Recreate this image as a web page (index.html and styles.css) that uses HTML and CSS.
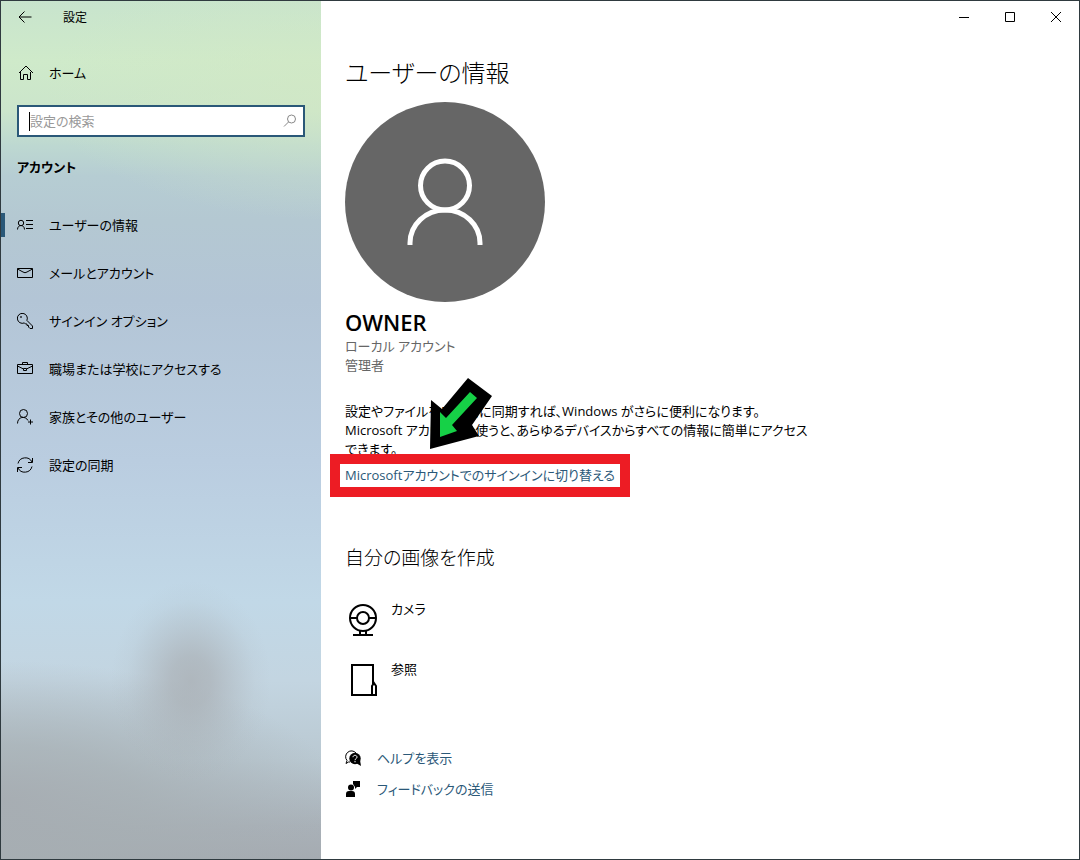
FILE: index.html
```html
<!DOCTYPE html>
<html lang="ja">
<head>
    <meta charset="UTF-8">
    <meta name="viewport" content="width=device-width, initial-scale=1">
    <title>設定</title>
    <link rel="stylesheet" href="styles.css">
</head>
<body>
    <div class="window">
        <aside class="sidebar">
            <header class="title-bar">
                <button class="back" type="button" aria-label="戻る">
                    <svg width="14" height="12" viewBox="0 0 14 12"><path d="M6.5 0.5L1 6l5.500 5.500M1 6h12.500"/></svg>
                </button>
                <span class="app-title">設定</span>
            </header>

            <a class="nav-link home" href="#home">
                <svg width="16" height="16" viewBox="0 0 16 16"><path d="M2 8l7-7 7 7M3.500 7v7.500h3v-5h4v5h3V7"/></svg>
                ホーム
            </a>

            <label class="search">
                <input type="text" placeholder="設定の検索" aria-label="設定の検索">
                <svg width="14" height="14" viewBox="0 0 14 14"><circle cx="8.500" cy="5" r="4"/><path d="M5.500 8L1 12.500"/></svg>
            </label>

            <h2 class="section-title">アカウント</h2>

            <nav class="nav">
                <a class="nav-link active" href="#info">
                    <svg width="16" height="16" viewBox="0 0 16 16"><circle cx="4" cy="6" r="2.700"/><path d="M0.500 12.500c0-5.300 7-5.300 7 0M9 3.500h7M9 7.500h7M9 11.500h7"/></svg>
                    ユーザーの情報
                </a>
                <a class="nav-link" href="#mail">
                    <svg width="16" height="16" viewBox="0 0 16 16"><path d="M0.500 3.500h15v9H0.500zM0.500 4L6 7q2 1.500 4 0l5.500-3"/></svg>
                    メールとアカウント
                </a>
                <a class="nav-link" href="#signin">
                    <svg width="16" height="16" viewBox="0 0 16 16"><path d="M9.900 7.400a5 5 0 1 0-2.500 2.500l1.100 1.100h1.500v1.500h1.500V14l1.500 1.500h2.500V13z"/><circle cx="4" cy="4" r="0.500"/></svg>
                    サインイン オプション
                </a>
                <a class="nav-link" href="#work">
                    <svg width="16" height="16" viewBox="0 0 16 16"><path d="M0.500 3.500h15v9H0.500zM5.500 3.500v-2h5v2M0.500 5l6 3M9.500 8l6-3M6.500 7.500h3v2h-3z"/></svg>
                    職場または学校にアクセスする
                </a>
                <a class="nav-link" href="#family">
                    <svg width="16" height="16" viewBox="0 0 16 16"><circle cx="6.500" cy="4.500" r="4"/><path d="M0.500 14.500c0-7 8-8 10.500-3M13.500 10.500v5M11 13h5"/></svg>
                    家族とその他のユーザー
                </a>
                <a class="nav-link" href="#sync">
                    <svg width="16" height="16" viewBox="0 0 16 16"><path d="M1 6.500a7.500 7.500 0 0 1 14-1.500M15.500 1v4.500H11M15 9.500a7.500 7.500 0 0 1-14 1.500M0.500 15v-4.500H5"/></svg>
                    設定の同期
                </a>
            </nav>
        </aside>

        <main class="main">
            <div class="window-controls">
                <button type="button" aria-label="最小化">
                    <svg width="10" height="10" viewBox="0 0 10 10"><path d="M0 5.500h10"/></svg>
                </button>
                <button type="button" aria-label="最大化">
                    <svg width="10" height="10" viewBox="0 0 10 10"><path d="M0.500 0.500h9v9h-9z"/></svg>
                </button>
                <button type="button" aria-label="閉じる">
                    <svg width="10" height="10" viewBox="0 0 10 10"><path d="M0 0l10 10M10 0L0 10"/></svg>
                </button>
            </div>

            <div class="content">
                <h1>ユーザーの情報</h1>
                <svg class="avatar" width="200" height="200" viewBox="0 0 200 200">
                    <circle class="avatar-bg" cx="100" cy="100" r="100"/>
                    <circle cx="100" cy="83.500" r="24.500"/>
                    <path d="M65 143v-2a35 33 0 0 1 70 0v2"/>
                </svg>
                <p class="user-name">OWNER</p>
                <p class="user-type">ローカル アカウント<br>管理者</p>

                <div class="account">
                    <p>設定やファイルを自動的に同期すれば、Windows がさらに便利になります。<br>
                    Microsoft アカウントを使うと、あらゆるデバイスからすべての情報に簡単にアクセス<br>
                    できます。</p>
                    <a class="link switch-link" href="#switch">Microsoftアカウントでのサインインに切り替える</a>
                    <svg class="arrow" width="62" height="72" viewBox="0 0 62 72">
                        <path class="arrow-edge" d="M38 0L62 18L42 47L49 58L0 71L1 22L12 31z"/>
                        <path class="arrow-fill" d="M40 14L47 20L22 47L27 53L10 59V34L16 40z"/>
                    </svg>
                </div>

                <h2>自分の画像を作成</h2>
                <div class="pictures">
                    <button type="button">
                        <svg width="36" height="40" viewBox="0 0 36 40"><circle cx="18" cy="18" r="13"/><circle cx="18" cy="18" r="6"/><path d="M5 18h7M24 18h7M15 30v5M21 30v5M8 35h20"/></svg>
                        カメラ
                    </button>
                    <button type="button">
                        <svg width="36" height="40" viewBox="0 0 36 40"><path d="M28 24V5H7v30h21M27 35V26l2-3 2 3v9z"/></svg>
                        参照
                    </button>
                </div>

                <div class="support">
                    <a class="link" href="#help">
                        <svg width="16" height="16" viewBox="0 0 16 16"><path class="line" d="M5 12H3.500L1 13.500l1-3A5 5 0 1 1 11 3"/><circle cx="10" cy="8.500" r="5.700"/><path d="M11 13l5 3-1-6z"/><path class="mark" d="M8 7.200c0-2.500 4-2.500 4 0 0 1.500-2 1.300-2 3M10 11v1.300"/></svg>
                        ヘルプを表示
                    </a>
                    <a class="link" href="#feedback">
                        <svg width="16" height="16" viewBox="0 0 16 16"><circle cx="6" cy="6.500" r="3"/><path d="M1 16v-3q0-3 3-3h3q3 0 3 3v3zM8 0h7v6h-3l-2 2V6L8 3z"/></svg>
                        フィードバックの送信
                    </a>
                </div>
            </div>
        </main>
    </div>
</body>
</html>
```
FILE: styles.css
```css
/* General Styles */
* {
  box-sizing: border-box;
}

body {
  margin: 0;
  font-family: "Open Sans", "Noto Sans CJK JP", sans-serif;
  font-size: 13px;
  line-height: 19px;
  font-feature-settings: "palt";
  color: #000;
}

h1, h2, p {
  margin: 0;
}

h1 {
  font-weight: 300;
}

a {
  color: inherit;
  text-decoration: none;
}

button {
  padding: 0;
  border: none;
  background: none;
  color: inherit;
  font: inherit;
  font-feature-settings: inherit;
}

svg {
  flex: none;
  fill: none;
  stroke: #000;
}

.window {
  display: flex;
  min-height: 100vh;
  border: 1px solid #2f3a3f;
  background: #fff;
}

/* Sidebar */
.sidebar {
  flex: 0 0 320px;
  background:
    radial-gradient(ellipse 80px 100px at 190px 680px, rgba(166, 170, 174, 0.7), rgba(166, 170, 174, 0.6) 25%, rgba(166, 170, 174, 0.3) 55%, rgba(166, 170, 174, 0.08) 80%, transparent),
    radial-gradient(ellipse 340px 140px at 0 800px, rgba(166, 172, 177, 0.9), rgba(166, 174, 178, 0.7) 40%, rgba(166, 174, 178, 0.35) 70%, transparent),
    radial-gradient(ellipse 300px 130px at 340px 90px, rgba(210, 232, 196, 0.7), transparent),
    linear-gradient(#c8e4cd 0, #cfeaca 60px, #cbe5cb 110px, #bdd8d1 145px, #b6cdd3 175px, #b4c8d2 220px, #b3c5d6 300px, #bacde0 460px, #c1d8e7 600px, #c3d5e1 680px, #b9c8d1 760px, #a9b1b8 825px, #a5abb1 100%);
}

.title-bar {
  display: flex;
  align-items: center;
  height: 32px;
}

.back {
  display: flex;
  justify-content: center;
  width: 48px;
}

.app-title {
  padding-left: 14px;
  font-size: 12px;
}

.nav-link {
  display: flex;
  align-items: center;
  gap: 16px;
  height: 48px;
  padding: 0 16px;
}

.home {
  margin-top: 16px;
}

.search {
  display: flex;
  align-items: center;
  height: 32px;
  margin: 8px 16px 20px;
  padding: 0 6px 0 10px;
  border: 2px solid #2a5878;
  background: #fff;
}

.search input {
  flex: 1;
  min-width: 0;
  height: 19px;
  padding: 0;
  border: none;
  border-left: 1px solid #000;
  outline: none;
  font: inherit;
  font-feature-settings: inherit;
}

.search input::placeholder {
  color: #999;
}

.search svg {
  stroke: #888;
}

.section-title {
  margin: 0 16px 24px;
  font-size: 13px;
  font-weight: 700;
  line-height: 20px;
}

.active {
  padding-left: 0;
}

.active::before {
  content: "";
  width: 4px;
  height: 24px;
  margin-right: -4px;
  background: #2a5878;
}

/* Window buttons */
.main {
  flex: 1;
  min-width: 0;
}

.window-controls {
  display: flex;
  justify-content: flex-end;
}

.window-controls button {
  display: flex;
  align-items: center;
  justify-content: center;
  width: 46px;
  height: 32px;
}

/* Content */
.content {
  padding: 22px 24px 24px;
}

h1 {
  font-size: 24px;
  line-height: 36px;
}

.avatar {
  display: block;
  margin-top: 11px;
  stroke: #fff;
  stroke-width: 5;
}

.avatar-bg {
  fill: #666;
  stroke: none;
}

.user-name {
  margin-top: 5px;
  font-size: 22px;
  font-weight: 600;
  line-height: 30px;
}

.user-type {
  color: #666;
}

.account {
  position: relative;
  margin-top: 27px;
  white-space: nowrap;
}

.link {
  color: #2a5878;
}

.switch-link {
  position: relative;
  display: inline-block;
  margin-top: 5px;
  line-height: 22px;
}

/* Red frame and arrow drawn over the text */
.switch-link::after {
  content: "";
  position: absolute;
  inset: -10px -15px -11px -15px;
  border: 10px solid #ed1c24;
}

.arrow {
  position: absolute;
  top: -24px;
  left: 85px;
  stroke: none;
}

.arrow-edge {
  fill: #000;
}

.arrow-fill {
  fill: #16d147;
}

.content h2 {
  margin-top: 58px;
  font-size: 19px;
  font-weight: 300;
  line-height: 28px;
}

.pictures {
  display: grid;
  justify-items: start;
  gap: 20px;
  margin-top: 28px;
}

.pictures button {
  display: flex;
  gap: 10px;
}

.pictures svg {
  stroke-width: 2;
}

.support {
  display: grid;
  justify-items: start;
  gap: 11px;
  margin-top: 48px;
}

.support .link {
  display: flex;
  align-items: center;
  gap: 16px;
  line-height: 20px;
}

.support svg {
  fill: #000;
  stroke: none;
}

.support .line {
  fill: none;
  stroke: #000;
}

.support .mark {
  fill: none;
  stroke: #fff;
}
```
